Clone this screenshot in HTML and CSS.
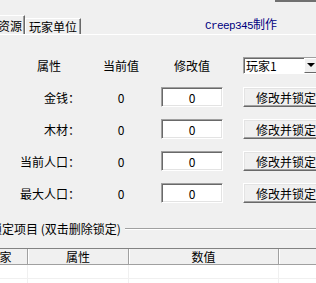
FILE: index.html
```html
<!DOCTYPE html>
<html lang="zh-CN">

<head>
    <meta charset="UTF-8">
    <title>资源修改</title>
    <link rel="stylesheet" href="styles.css">
</head>

<body>
    <div class="top-edge"></div>

    <div class="tabbar">
        <div class="tab tab-active">资源</div>
        <div class="tab">玩家单位</div>
        <div class="credit"><span class="credit-latin">Creep345</span>制作</div>
    </div>

    <div class="edit-grid">
        <div class="head head-name">属性</div>
        <div class="head">当前值</div>
        <div class="head">修改值</div>
        <div class="combo">
            <span class="combo-text">玩家1</span>
            <span class="combo-arrow"><span class="tri"></span></span>
        </div>

        <div class="label">金钱：</div>
        <div class="value">0</div>
        <input class="field" type="text" value="0">
        <button class="btn">修改并锁定</button>

        <div class="label">木材：</div>
        <div class="value">0</div>
        <input class="field" type="text" value="0">
        <button class="btn">修改并锁定</button>

        <div class="label">当前人口：</div>
        <div class="value">0</div>
        <input class="field" type="text" value="0">
        <button class="btn">修改并锁定</button>

        <div class="label">最大人口：</div>
        <div class="value">0</div>
        <input class="field" type="text" value="0">
        <button class="btn">修改并锁定</button>
    </div>

    <div class="group">
        <div class="group-title">
            <span class="group-text">锁定项目 (双击删除锁定)</span>
            <div class="group-line"></div>
        </div>

        <div class="list">
            <div class="list-head">
                <div class="hcell c1">玩家</div>
                <div class="hcell c2">属性</div>
                <div class="hcell c3">数值</div>
                <div class="hcell c4"></div>
            </div>
            <div class="list-row">
                <div class="cell c1"></div>
                <div class="cell c2"></div>
                <div class="cell c3"></div>
                <div class="cell c4"></div>
            </div>
            <div class="list-row">
                <div class="cell c1"></div>
                <div class="cell c2"></div>
                <div class="cell c3"></div>
                <div class="cell c4"></div>
            </div>
        </div>
    </div>
</body>

</html>
```

FILE: styles.css
```css
body {
    margin: 0;
    width: 316px;
    height: 283px;
    overflow: hidden;
    background: #f0f0f0;
    color: #000;
    font-family: "Noto Sans CJK SC", "Liberation Sans", sans-serif;
    font-size: 12px;
}

.top-edge {
    height: 2px;
    margin-left: 275px;
    background: #707070;
}

/* tabs */
.tabbar {
    display: flex;
    align-items: flex-end;
    height: 32px;
    border-bottom: 1px solid #fff;
}

.tab {
    height: 15px;
    line-height: 15px;
    padding: 0 3px;
    border-top: 1px solid #fff;
    border-left: 1px solid #fff;
    border-right: 1px solid #696969;
    box-shadow: inset -1px 0 #a0a0a0;
    white-space: nowrap;
}

.tab-active {
    height: 18px;
    line-height: 20px;
    margin-left: -6px;
    padding: 0 2px 0 4px;
    border-left: none;
}

.credit {
    margin-left: auto;
    margin-right: 39px;
    line-height: 16px;
    color: #000080;
    white-space: nowrap;
}

.credit-latin {
    font-family: "Liberation Mono", monospace;
    font-size: 11px;
    letter-spacing: -0.6px;
}

/* edit form */
.edit-grid {
    display: grid;
    grid-template-columns: 81px 80px 62px 96px;
    grid-auto-rows: 20px;
    row-gap: 12px;
    align-items: center;
    margin-top: 20px;
}

.head {
    text-align: center;
}

.head-name {
    text-align: right;
    padding-right: 20px;
}

.label {
    text-align: right;
    padding-right: 1px;
    white-space: nowrap;
}

.value {
    text-align: center;
}

.field {
    box-sizing: border-box;
    width: 62px;
    height: 20px;
    margin: 0;
    padding: 0;
    border: 1px solid;
    border-color: #a0a0a0 #fff #fff #a0a0a0;
    box-shadow: inset 1px 1px #696969, inset -1px -1px #e3e3e3;
    background: #fff;
    font-family: inherit;
    font-size: 12px;
    text-align: center;
    outline: none;
}

.btn {
    box-sizing: border-box;
    width: 86px;
    height: 20px;
    margin: 0 0 0 20px;
    padding: 0;
    border: 1px solid;
    border-color: #fff #696969 #696969 #fff;
    box-shadow: inset -1px -1px #a0a0a0, inset 1px 1px #e3e3e3;
    background: #f0f0f0;
    font-family: inherit;
    font-size: 12px;
    text-align: center;
    white-space: nowrap;
}

.combo {
    box-sizing: border-box;
    display: flex;
    width: 76px;
    height: 17px;
    margin-left: 20px;
    border: 1px solid;
    border-color: #a0a0a0 #fff #fff #a0a0a0;
    box-shadow: inset 1px 1px #696969;
    background: #fff;
}

.combo-text {
    flex: 1;
    padding-left: 2px;
    line-height: 15px;
}

.combo-arrow {
    box-sizing: border-box;
    width: 14px;
    display: flex;
    align-items: center;
    padding-left: 2px;
    border: 1px solid;
    border-color: #fff #696969 #696969 #fff;
    background: #f0f0f0;
}

.tri {
    width: 0;
    height: 0;
    border-left: 4px solid transparent;
    border-right: 4px solid transparent;
    border-top: 4px solid #000;
}

/* locked items */
.group {
    margin-top: 20px;
}

.group-title {
    display: flex;
    align-items: center;
    height: 12px;
    line-height: 12px;
}

.group-text {
    margin-left: -10px;
    white-space: nowrap;
}

.group-line {
    flex: 1;
    margin-left: 4px;
    border-top: 1px solid #a0a0a0;
    border-bottom: 1px solid #fff;
}

.list {
    margin-top: 13px;
    margin-left: -28px;
    width: 400px;
    background: #fff;
    border-top: 1px solid #828282;
}

.list-head {
    display: flex;
    height: 15px;
    border-bottom: 1px solid #a0a0a0;
    background: #f0f0f0;
}

.hcell {
    box-sizing: border-box;
    line-height: 15px;
    text-align: center;
    border-right: 1px solid #a0a0a0;
    box-shadow: inset 1px 0 #fff;
    white-space: nowrap;
}

.list-row {
    display: flex;
    height: 13px;
    border-bottom: 1px solid #f0f0f0;
}

.cell {
    box-sizing: border-box;
    border-right: 1px solid #f0f0f0;
}

.c1 { width: 56px; }
.c2 { width: 101px; }
.c3 { width: 150px; }
.c4 { width: 80px; }
```
